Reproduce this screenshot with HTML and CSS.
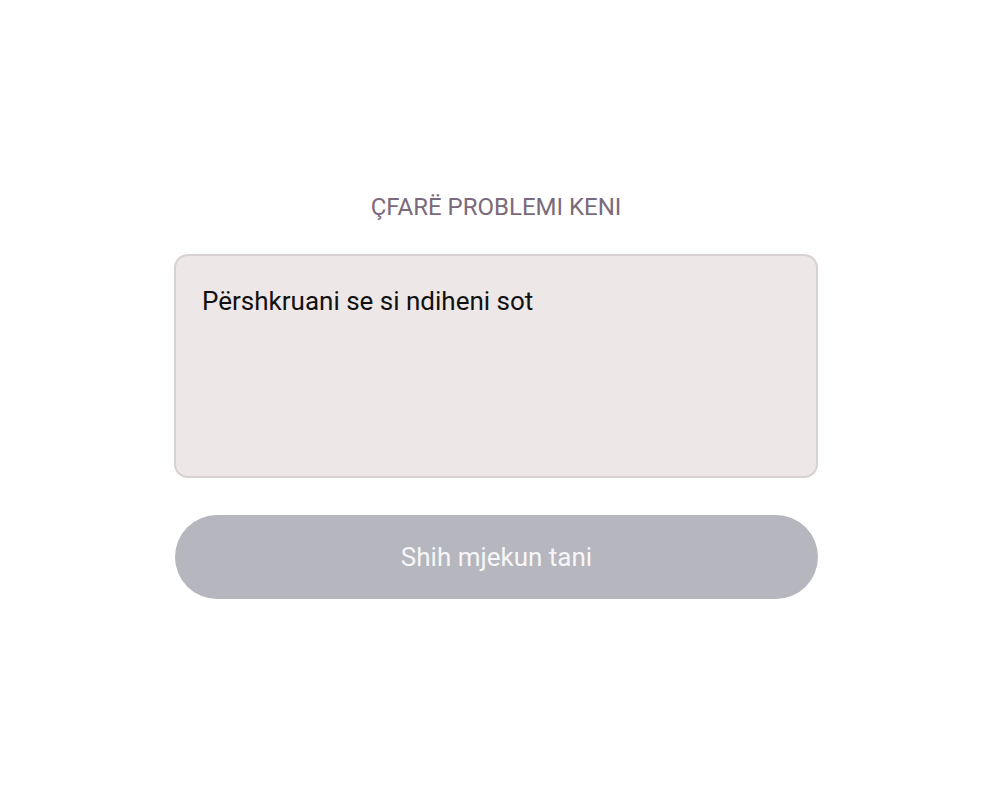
FILE: index.html
```html
<!DOCTYPE html>
<html lang="sq">
<head>
<meta charset="utf-8">
<link rel="stylesheet" href="styles.css">
</head>
<body>
<main class="page">
  <section class="form">
    <h1 class="label">ÇFARË PROBLEMI KENI</h1>
    <div class="field">Përshkruani se si ndiheni sot</div>
    <button class="cta" type="button">Shih mjekun tani</button>
  </section>
</main>
</body>
</html>
```
FILE: styles.css
```css
html, body {
  margin: 0;
  padding: 0;
  background: #ffffff;
}
body {
  font-family: Roboto, "Noto Sans", sans-serif;
  width: 1000px;
  height: 800px;
}
.page {
  display: flex;
  justify-content: center;
  padding-top: 192px;
  padding-right: 8px;
}
.form {
  width: 644px;
  display: flex;
  flex-direction: column;
  align-items: stretch;
}
.label {
  margin: 0;
  text-align: center;
  font-size: 24px;
  font-weight: 400;
  line-height: 30px;
  color: #7b6a7c;
  letter-spacing: 0;
}
.field {
  margin-top: 32px;
  height: 224px;
  box-sizing: border-box;
  border: 2px solid #d8d1d1;
  border-radius: 14px;
  background: #ede7e7;
  padding: 28px 26px;
  font-size: 26px;
  line-height: 34px;
  color: #111111;
}
.cta {
  margin-top: 37px;
  margin-left: 1px;
  height: 84px;
  border: none;
  border-radius: 42px;
  background: #b6b6be;
  color: #f6f6f8;
  font-family: inherit;
  font-size: 26px;
  cursor: pointer;
}
```
